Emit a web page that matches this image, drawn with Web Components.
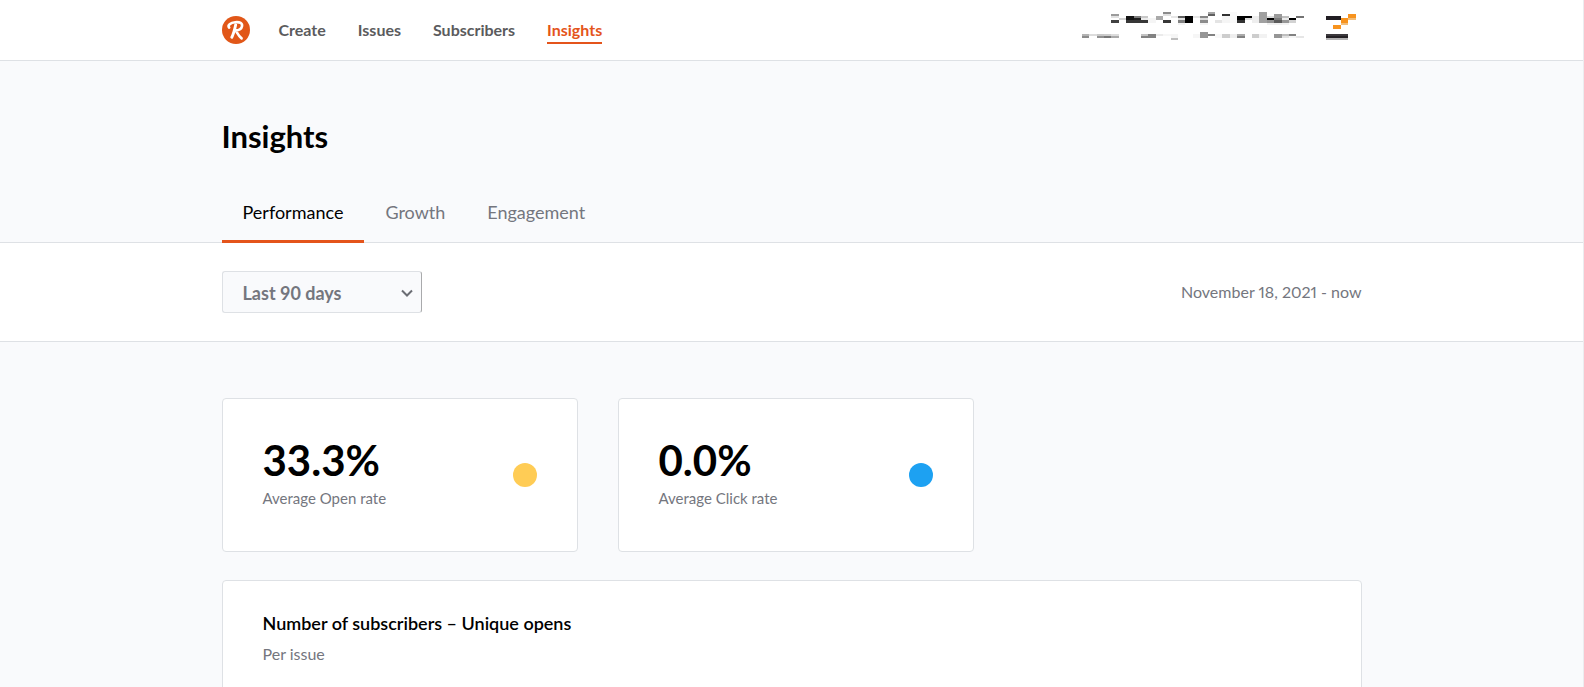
<!DOCTYPE html>
<html lang="en">
<head>
<meta charset="utf-8">
<title>Insights</title>
<style>
  :root { --bg: #f9fafc; --line: #dee1e5; --muted: #74767e; --accent: #e4541b; }
  html { background: var(--bg); }
  body { margin: 0; overflow: hidden; min-height: 100vh; box-sizing: border-box; border-right: 1px solid #ececef;
    font-family: Lato, "Liberation Sans", sans-serif; font-size: 16px; line-height: 24px; color: #000; }
</style>
</head>
<body>
<insights-page></insights-page>
<script>
const define = (name, html, setup) => {
  const template = document.createElement('template');
  template.innerHTML = html;
  customElements.define(name, class extends HTMLElement {
    constructor() {
      super();
      this.attachShadow({ mode: 'open' }).append(template.content.cloneNode(true));
    }
    connectedCallback() { if (setup) setup(this, this.shadowRoot); }
  });
};

define('page-container', `
  <style>:host { display: block; box-sizing: border-box; width: 100%; max-width: 1180px; margin: 0 auto; padding: 0 20px; }</style>
  <slot></slot>`);

define('brand-logo', `
  <style>:host { display: block; width: 28px; height: 28px; } a, svg { display: block; }</style>
  <a href="#" aria-label="Home"><svg width="28" height="28" viewBox="0 0 28 28" fill="none" stroke="#fff" stroke-linecap="round" stroke-linejoin="round">
    <circle cx="14" cy="14" r="14" fill="#e15718" stroke="none"/>
    <path stroke-width="2.6" d="M7.2 11.6C5.2 9.3 8.5 6.6 13.2 6.2C18 5.7 20.6 7.3 20 10.2C19.5 12.9 16.7 14.3 13.6 14.4C15.2 16.8 16.6 20.2 19.6 22.4"/>
    <path stroke-width="2.9" d="M13.7 8.8C12.7 13.4 11.7 17.7 9.8 21.3"/>
  </svg></a>`);

define('nav-link', `
  <style>
    :host { display: block; color: #5b5b5d; font-weight: 700; }
    a { display: block; color: inherit; text-decoration: none; border-bottom: 2px solid transparent; }
    :host([active]) { color: var(--accent); }
    :host([active]) a { border-color: currentColor; }
  </style>
  <a href="#"><slot></slot></a>`);

define('account-menu', `
  <style>
    :host { display: block; }
    button { display: flex; align-items: flex-start; gap: 22px; padding: 0 6px 0 0; border: 0; background: none; }
    svg { display: block; shape-rendering: crispEdges; }
  </style>
  <button type="button" aria-label="Account">
    <svg id="name" width="222" height="28" viewBox="0 0 222 28"></svg>
    <svg id="avatar" width="30" height="28" viewBox="0 0 30 28"></svg>
  </button>`, (host, root) => {
  /* mosaic tiles: x, y, width, height, grey level */
  const tiles = [
    [29,2,8,2,155],[29,4,8,2,225],[29,8,8,3,65],[37,6,7,2,210],
    [44,4,8,4,20],[44,8,22,3,55],[52,4,7,2,125],[52,6,7,2,30],[59,4,7,2,200],[59,6,7,2,235],[66,6,8,5,245],
    [74,4,7,4,170],[81,0,8,2,140],[81,2,8,2,225],[81,8,8,3,55],[89,4,7,2,230],
    [96,4,7,2,95],[96,6,7,2,225],[96,8,7,3,130],[96,11,7,2,243],[103,4,8,7,0],[111,4,7,2,230],
    [118,4,8,2,135],[118,6,8,2,220],[118,8,8,3,140],[118,11,8,2,243],
    [126,0,7,2,165],[126,2,7,2,95],[133,8,7,3,228],[140,2,8,2,50],[140,4,8,7,245],[148,0,7,11,249],
    [155,4,8,4,0],[155,8,8,3,50],[163,4,7,2,0],[163,6,7,2,220],[170,4,7,7,238],[177,0,8,11,160],
    [185,4,7,2,220],[185,6,7,2,0],[185,8,7,3,145],[185,11,7,2,240],
    [192,2,8,4,155],[192,6,8,2,125],[192,8,8,3,90],[192,11,8,2,240],
    [200,4,7,2,190],[200,6,7,2,235],[200,8,7,3,150],[200,11,7,2,243],[207,6,7,2,0],[207,8,7,3,210],[214,4,8,2,115],
    [0,22,7,2,180],[0,24,7,2,140],[7,22,8,2,220],[15,22,7,2,200],[15,24,7,2,145],[22,22,7,2,205],[22,24,7,2,120],[29,22,8,2,220],[29,24,8,2,170],
    [59,22,7,2,195],[59,24,7,2,130],[66,22,8,4,130],[74,22,7,2,235],[81,22,8,2,247],[89,22,7,2,245],[89,24,7,2,245],[89,26,7,2,190],
    [111,22,7,4,246],[118,20,8,6,150],[126,22,7,2,130],[133,22,7,4,248],[140,22,8,4,205],[148,22,7,4,238],[155,22,8,2,170],[155,24,8,2,130],
    [170,22,7,4,205],[177,22,8,4,242],[192,22,8,4,150],[200,22,7,2,190],[200,24,7,2,225],[207,22,7,2,130],[207,24,7,2,245],[214,24,8,2,230]
  ];
  const rect = (x, y, w, h, fill) => `<rect x="${x}" y="${y}" width="${w}" height="${h}" fill="${fill}"/>`;
  root.getElementById('name').innerHTML = tiles.map(([x, y, w, h, g]) => rect(x, y, w, h, `rgb(${g},${g},${g})`)).join('');
  root.getElementById('avatar').innerHTML =
    rect(0, 4, 15, 4, '#211d23') + rect(22, 2, 8, 4, '#f7931e') + rect(22, 6, 8, 2, '#f3bd78') +
    rect(15, 6, 7, 5, '#f7931e') + rect(15, 11, 7, 2, '#f3bd78') + rect(7, 13, 8, 4, '#f7931e') +
    rect(0, 22, 22, 2, '#3b383c') + rect(0, 24, 22, 2, '#242125') + rect(0, 26, 22, 2, '#b3b2b3');
});

define('site-header', `
  <style>
    :host { display: block; background: #fff; border-bottom: 1px solid var(--line); }
    .bar { display: flex; align-items: center; height: 60px; }
    nav { display: flex; gap: 32px; margin-left: 29px; padding-top: 2px; }
    account-menu { margin-left: auto; padding-bottom: 8px; }
  </style>
  <page-container><div class="bar">
    <brand-logo></brand-logo>
    <nav aria-label="Main"><nav-link>Create</nav-link><nav-link>Issues</nav-link><nav-link>Subscribers</nav-link><nav-link active>Insights</nav-link></nav>
    <account-menu></account-menu>
  </div></page-container>`);

define('tab-link', `
  <style>
    :host { display: block; color: var(--muted); font-size: 18px; }
    a { display: block; padding: 15px 21px 16px; color: inherit; text-decoration: none; border-bottom: 3px solid transparent; }
    :host([active]) { color: #000; }
    :host([active]) a { border-color: var(--accent); }
  </style>
  <a href="#"><slot></slot></a>`);

define('page-heading', `
  <style>
    :host { display: block; padding-top: 55px; border-bottom: 1px solid var(--line); }
    h1 { margin: 0; font-size: 31px; line-height: 40px; font-weight: 700; }
    nav { display: flex; margin: 29px 0 -1px; }
  </style>
  <page-container>
    <h1>Insights</h1>
    <nav aria-label="Insights"><tab-link active>Performance</tab-link><tab-link>Growth</tab-link><tab-link>Engagement</tab-link></nav>
  </page-container>`);

define('period-select', `
  <style>
    :host { display: grid; width: 200px; align-items: center; }
    select, svg { grid-area: 1 / 1; }
    select { appearance: none; box-sizing: border-box; width: 100%; height: 42px; margin: 0; padding: 2px 40px 0 20px;
      border: 1px solid var(--line); border-right-color: #a9aaac; border-radius: 3px; background: var(--bg);
      font: inherit; font-size: 18px; font-weight: 700; color: var(--muted); }
    svg { justify-self: end; margin: 2px 8px 0 0; pointer-events: none; }
  </style>
  <select aria-label="Period"><option>Last 90 days</option><option>Last 30 days</option></select>
  <svg width="14" height="10" viewBox="0 0 14 10" fill="none" stroke="#6b6d74" stroke-width="2"><path d="M2 2.5 7 7.5 12 2.5"/></svg>`);

define('filter-bar', `
  <style>
    :host { display: block; background: #fff; border-bottom: 1px solid var(--line); padding: 28px 0; }
    .row { display: flex; align-items: center; justify-content: space-between; color: var(--muted); }
    span { font-variant-numeric: proportional-nums; }
  </style>
  <page-container><div class="row"><period-select></period-select><span>November 18, 2021 - now</span></div></page-container>`);

define('stat-card', `
  <style>
    :host { display: flex; box-sizing: border-box; align-items: center; justify-content: space-between; padding: 40px;
      background: #fff; border: 1px solid var(--line); border-radius: 4px; }
    .value { padding-bottom: 4px; font-size: 42px; line-height: 44px; font-weight: 700; }
    .text { padding-bottom: 2px; }
    .label { font-size: 15px; color: var(--muted); }
    .dot { width: 24px; height: 24px; border-radius: 50%; background: var(--dot); }
  </style>
  <div class="text"><div class="value"><slot name="value"></slot></div><div class="label"><slot></slot></div></div>
  <span class="dot"></span>`);

define('chart-card', `
  <style>
    :host { display: block; box-sizing: border-box; min-height: 400px; padding: 29px 40px; background: #fff; border: 1px solid var(--line); border-radius: 4px; }
    h2 { margin: 0; font-size: 18px; line-height: 26px; font-weight: 600; }
    p { margin: 6px 0 0; color: var(--muted); }
  </style>
  <h2><slot name="title"></slot></h2><p><slot></slot></p>`);

define('insights-page', `
  <style>
    :host { display: block; height: 100vh; overflow: hidden; }
    .stats { display: grid; grid-template-columns: repeat(auto-fill, 356px); gap: 40px; margin: 56px 0 28px; }
    stat-card { height: 154px; }
    .open { --dot: #ffcc55; } .click { --dot: #1da1f2; }
  </style>
  <site-header></site-header>
  <main>
    <page-heading></page-heading>
    <filter-bar></filter-bar>
    <page-container>
      <div class="stats">
        <stat-card class="open"><span slot="value">33.3%</span>Average Open rate</stat-card>
        <stat-card class="click"><span slot="value">0.0%</span>Average Click rate</stat-card>
      </div>
      <chart-card><span slot="title">Number of subscribers – Unique opens</span>Per issue</chart-card>
    </page-container>
  </main>`);
</script>
</body>
</html>
